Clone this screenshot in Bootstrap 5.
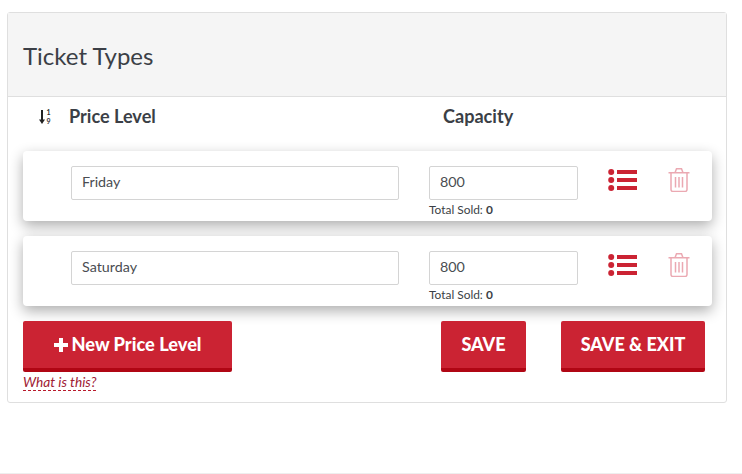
<!DOCTYPE html>
<html lang="en">
<head>
<meta charset="utf-8">
<title>Ticket Types</title>
<link rel="stylesheet" href="https://cdn.jsdelivr.net/npm/bootstrap@5.3.0/dist/css/bootstrap.min.css">
<style>
html, body { height: 100%; }
body { font-family: Lato, sans-serif; color: #3b3f46; background: #fff; padding: 12px 15px 0 7px; overflow: hidden; }
.tt-page { border-bottom: 1px solid #eee; height: 462px; margin: 0 -15px 0 -7px; padding: 0 15px 0 7px; }
.tt-panel { width: 720px; height: 391px; border: 1px solid #dfdfdf; border-radius: 3px; }
.tt-head { height: 84px; background: #f5f5f5; border-bottom: 1px solid #dfdfdf; padding: 3px 15px 0; }
.tt-head h1 { font-size: 24px; font-weight: 400; color: #3b3f46; margin: 0; }
.tt-body { padding: 0 15px; }
.tt-cols { height: 39px; font-size: 18.1px; font-weight: 700; color: #3b3f46; margin-bottom: 15px; }
.tt-sort { width: 46px; padding-left: 15px; }
.tt-col-price { width: 374px; }
.tt-rowcard { width: 689px; height: 70px; background: #fff; border-radius: 4px; box-shadow: 0 5px 14px rgba(0,0,0,.32); margin-bottom: 15px; padding: 15px 0 0 48px; }
.tt-name { width: 328px; margin-right: 30px; }
.tt-cap { width: 149px; margin-right: 30px; }
.tt-rowcard .form-control { height: 34px; border: 1px solid #d4d4d4; border-radius: 2px; padding: 0 10px 3px; font-size: 14.3px; color: #4a4d52; }
.tt-sold { font-size: 11.9px; line-height: 14px; margin-top: 3px; color: #3b3f46; white-space: nowrap; }
.tt-sold b { font-weight: 700; }
.tt-icons { gap: 31px; padding-top: 2px; }
.tt-list { margin-top: 1px; }
.tt-btn { height: 51px; background: #cb2333; border: 0; border-bottom: 4px solid #b00614; border-radius: 2px; color: #fff; font-weight: 900; font-size: 18px; padding: 0; display: flex; align-items: center; justify-content: center; }
.tt-btn:hover { background: #cb2333; color: #fff; border-color: #b00614; }
.tt-new { width: 209px; font-size: 18.2px; }
.tt-save { width: 85px; margin-right: 35px; }
.tt-exit { width: 144px; margin-right: 6px; }
.tt-plus { display: inline-block; margin-right: 4px; }
.tt-help { display: block; width: fit-content; font-size: 13.7px; font-style: italic; font-weight: 400; color: #a02033; line-height: 16px; margin-top: 2px; border-bottom: 1px dashed #b8192c; text-decoration: none; }
.tt-digit { font-family: Lato, sans-serif; font-size: 7px; font-weight: 700; fill: #333; }
</style>
</head>
<body>
<div class="tt-page">
<div class="tt-panel bg-white">
  <div class="tt-head d-flex align-items-center"><h1>Ticket Types</h1></div>
  <div class="tt-body">
    <div class="tt-cols d-flex align-items-center">
      <div class="tt-sort">
        <svg width="14" height="18" viewBox="0 0 14 18" aria-hidden="true" class="d-block">
          <path d="M4 2v10" stroke="#222" stroke-width="2" fill="none"/>
          <path d="M1 11.500h6L4 16z" fill="#222"/>
          <text class="tt-digit" x="8.500" y="7">1</text>
          <text class="tt-digit" x="8.500" y="16">9</text>
        </svg>
      </div>
      <div class="tt-col-price">Price Level</div>
      <div>Capacity</div>
    </div>

    <div class="tt-rowcard d-flex">
      <div class="tt-name"><input class="form-control" type="text" value="Friday"></div>
      <div class="tt-cap">
        <input class="form-control" type="text" value="800">
        <div class="tt-sold">Total Sold: <b>0</b></div>
      </div>
      <div class="tt-icons d-flex align-items-start">
        <svg class="tt-list" width="29" height="22" viewBox="0 0 29 22" aria-hidden="true"><g fill="#cb2333"><circle cx="3.200" cy="3" r="3"/><circle cx="3.200" cy="11" r="3"/><circle cx="3.200" cy="19" r="3"/><rect x="9" y="1" width="20" height="4"/><rect x="9" y="9" width="20" height="4"/><rect x="9" y="17" width="20" height="4"/></g></svg>
        <svg width="22" height="24" viewBox="0 0 22 24" aria-hidden="true" fill="none" stroke="#eba9b2" stroke-width="1.500"><path d="M.5 4.800h21M7 4.800l1.500-4h5l1.500 4M3 4.800v16.700a2 2 0 0 0 2 2h12a2 2 0 0 0 2-2V4.800M7.500 9v10.500M11 9v10.500M14.500 9v10.500"/></svg>
      </div>
    </div>

    <div class="tt-rowcard d-flex">
      <div class="tt-name"><input class="form-control" type="text" value="Saturday"></div>
      <div class="tt-cap">
        <input class="form-control" type="text" value="800">
        <div class="tt-sold">Total Sold: <b>0</b></div>
      </div>
      <div class="tt-icons d-flex align-items-start">
        <svg class="tt-list" width="29" height="22" viewBox="0 0 29 22" aria-hidden="true"><g fill="#cb2333"><circle cx="3.200" cy="3" r="3"/><circle cx="3.200" cy="11" r="3"/><circle cx="3.200" cy="19" r="3"/><rect x="9" y="1" width="20" height="4"/><rect x="9" y="9" width="20" height="4"/><rect x="9" y="17" width="20" height="4"/></g></svg>
        <svg width="22" height="24" viewBox="0 0 22 24" aria-hidden="true" fill="none" stroke="#eba9b2" stroke-width="1.500"><path d="M.5 4.800h21M7 4.800l1.500-4h5l1.500 4M3 4.800v16.700a2 2 0 0 0 2 2h12a2 2 0 0 0 2-2V4.800M7.500 9v10.500M11 9v10.500M14.500 9v10.500"/></svg>
      </div>
    </div>

    <div class="d-flex">
      <div class="me-auto">
        <button type="button" class="btn tt-btn tt-new"><svg class="tt-plus" width="14" height="14" viewBox="0 0 14 14" aria-hidden="true"><path d="M5 0h4v5h5v4H9v5H5V9H0V5h5z" fill="#fff"/></svg>New Price Level</button>
        <a href="#" class="tt-help">What is this?</a>
      </div>
      <button type="button" class="btn tt-btn tt-save">SAVE</button>
      <button type="button" class="btn tt-btn tt-exit">SAVE &amp; EXIT</button>
    </div>
  </div>
</div>
</div>
</body>
</html>
